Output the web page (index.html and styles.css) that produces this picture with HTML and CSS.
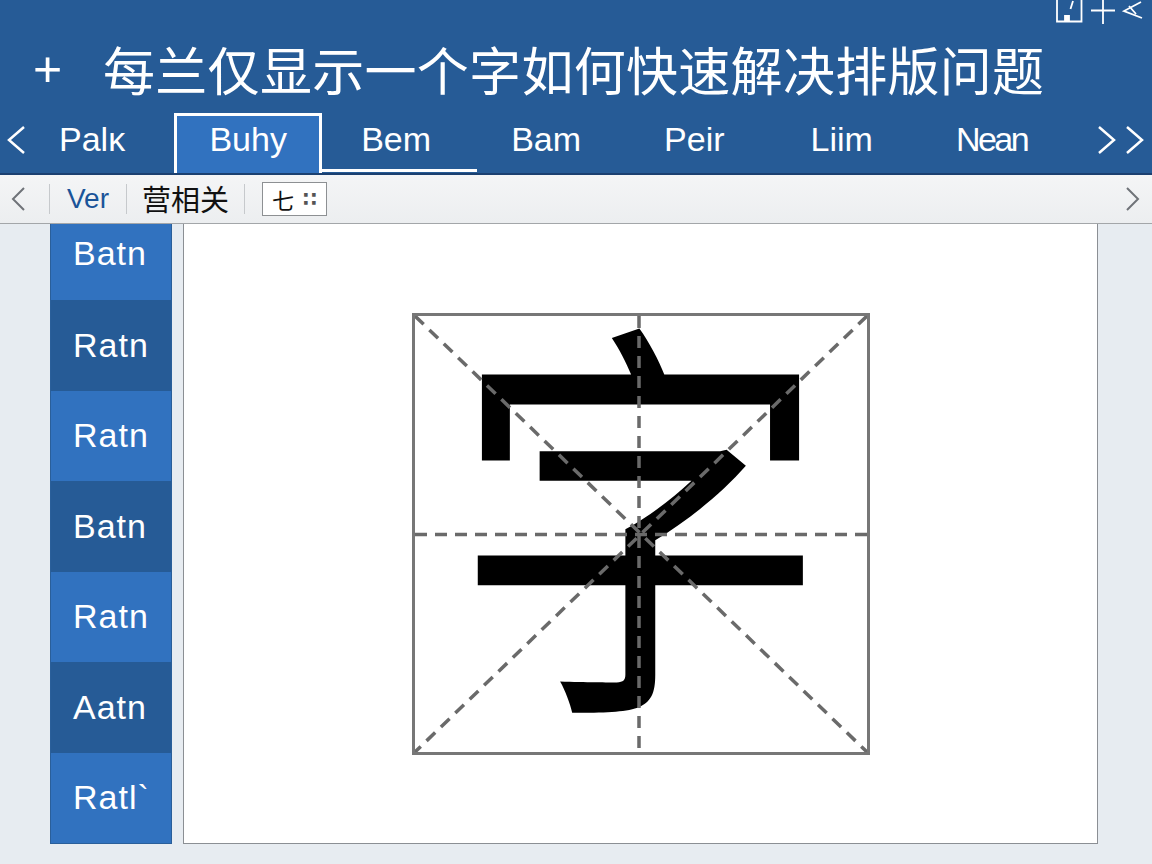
FILE: index.html
```html
<!DOCTYPE html>
<html lang="zh-CN">
  <head>
    <meta charset="UTF-8" />
    <meta name="viewport" content="width=device-width, initial-scale=1.0" />
    <title>每兰仅显示一个字如何快速解决排版问题</title>
    <link rel="stylesheet" href="styles.css">
  </head>
  <body>
    <header class="header">
      <div class="header__tools">
        <svg class="header__icon" width="90" height="24" viewBox="0 0 90 24" fill="none" stroke="#fff" stroke-width="1.800">
          <path d="M1 0v21.500h24.500V0" />
          <path d="M17 1l-2.500 8" />
          <path d="M9 21v-5h4v5" fill="#fff" />
          <path d="M35 10.500h24M47 0v24" />
          <path d="M85 2L68 11l18 7M73 6l7 8" />
        </svg>
      </div>
      <div class="header__title">
        <span class="header__plus">+</span>
        <h1 class="header__text">每兰仅显示一个字如何快速解决排版问题</h1>
      </div>
      <nav class="tabs">
        <svg class="tabs__arrow" width="20" height="30" viewBox="0 0 20 30" fill="none" stroke="#fff" stroke-width="2.500"><path d="M18 2L3 15l15 13" /></svg>
        <a class="tab tab--first">Palĸ</a>
        <a class="tab tab--active">Buhy</a>
        <a class="tab tab--line">Bem</a>
        <a class="tab tab--bam">Bam</a>
        <a class="tab tab--wide">Peir</a>
        <a class="tab tab--wide">Liim</a>
        <a class="tab tab--last">Nean</a>
        <svg class="tabs__next" width="48" height="30" viewBox="0 0 48 30" fill="none" stroke="#fff" stroke-width="2.500"><path d="M2 2l15 13L2 28M30 2l15 13-15 13" /></svg>
      </nav>
    </header>

    <div class="toolbar">
      <svg class="toolbar__arrow" width="14" height="24" viewBox="0 0 14 24" fill="none" stroke="#6f7378" stroke-width="2"><path d="M13 1L2 12l11 11" /></svg>
      <span class="toolbar__sep toolbar__sep--first"></span>
      <span class="toolbar__link">Ver</span>
      <span class="toolbar__sep"></span>
      <span class="toolbar__label">营相关</span>
      <span class="toolbar__sep"></span>
      <div class="toolbar__box"><span>七</span><span class="toolbar__dots">∷</span></div>
      <svg class="toolbar__next" width="14" height="24" viewBox="0 0 14 24" fill="none" stroke="#6f7378" stroke-width="2"><path d="M1 1l11 11L1 23" /></svg>
    </div>

    <main class="main">
      <ul class="side">
        <li class="side__item side__item--first">Batn</li>
        <li class="side__item side__item--dark">Ratn</li>
        <li class="side__item">Ratn</li>
        <li class="side__item side__item--dark">Batn</li>
        <li class="side__item">Ratn</li>
        <li class="side__item side__item--dark">Aatn</li>
        <li class="side__item">Ratl`</li>
      </ul>
      <section class="canvas">
        <div class="grid">
          <span class="grid__char">字</span>
          <svg class="grid__lines" viewBox="0 0 452 436" preserveAspectRatio="none" fill="none" stroke="#6a6a6a" stroke-width="3.500" stroke-dasharray="12 8">
            <path d="M0 0L452 436" />
            <path d="M452 0L0 436" />
            <path d="M0 218.500H452" />
            <path d="M224 0V436" />
          </svg>
        </div>
      </section>
    </main>
  </body>
</html>
```

FILE: styles.css
```css
* {
  margin: 0;
  padding: 0;
  box-sizing: border-box;
}

body {
  width: 1152px;
  height: 864px;
  overflow: hidden;
  font-family: "Liberation Sans", "Noto Sans CJK SC", sans-serif;
  background-color: #e7ecf1;
  display: flex;
  flex-direction: column;
}

/* header */
.header {
  height: 175px;
  background-color: #265b96;
  border-bottom: 2px solid #1b4070;
  color: #fff;
}

.header__tools {
  height: 24px;
  display: flex;
  justify-content: flex-end;
  padding-right: 6px;
}

.header__title {
  height: 89px;
  display: flex;
  align-items: center;
  padding-left: 33px;
}

.header__plus {
  width: 70px;
  font-size: 50px;
  line-height: 1;
  font-weight: 400;
}

.header__text {
  font-family: "Noto Sans CJK SC", sans-serif;
  font-size: 52px;
  font-weight: 400;
  letter-spacing: 0.3px;
  white-space: nowrap;
}

.tabs {
  height: 60px;
  display: flex;
  align-items: center;
}

.tabs__arrow {
  margin-left: 6px;
  margin-top: -6px;
  flex: none;
}

.tab {
  height: 60px;
  padding: 0 40px;
  font-size: 34px;
  line-height: 53px;
  white-space: nowrap;
}

.tab--first {
  padding: 0 49px 0 33px;
}

.tab--active {
  width: 148px;
  padding: 0;
  text-align: center;
  background-color: #3172bf;
  border: 3px solid #fff;
  border-bottom: none;
  line-height: 47px;
}

.tab--line {
  width: 155px;
  padding: 0 0 0 39px;
  border-bottom: 3px solid #fff;
  height: 59px;
  margin-bottom: 1px;
}

.tab--bam {
  padding: 0 40px 0 34px;
}

.tab--wide {
  padding: 0 43px;
}

.tab--last {
  letter-spacing: -2.5px;
}

.tabs__next {
  margin-left: auto;
  margin-right: 7px;
  margin-top: -6px;
  flex: none;
}

/* toolbar */
.toolbar {
  height: 49px;
  background: linear-gradient(#f4f5f6, #eceef0);
  border-bottom: 1px solid #a3a6a9;
  display: flex;
  align-items: center;
  padding: 0 12px 0 11px;
}

.toolbar__sep {
  width: 1px;
  height: 30px;
  background-color: #c6c9cc;
}

.toolbar__sep--first {
  margin-left: 24px;
}

.toolbar__link {
  font-size: 28px;
  color: #1a5499;
  width: 76px;
  text-align: center;
}

.toolbar__label {
  font-family: "Noto Sans CJK SC", sans-serif;
  font-size: 29px;
  line-height: 34px;
  color: #111;
  width: 117px;
  padding-bottom: 3px;
  text-align: center;
}

.toolbar__box {
  margin-left: 17px;
  width: 65px;
  height: 34px;
  background-color: #fff;
  border: 1px solid #8d9093;
  display: flex;
  align-items: center;
  padding-left: 9px;
  gap: 9px;
  font-family: "Noto Sans CJK SC", sans-serif;
  font-size: 22px;
  color: #111;
}

.toolbar__dots {
  color: #555;
  font-family: "DejaVu Sans", sans-serif;
  font-size: 20px;
  font-weight: 700;
}

.toolbar__next {
  margin-left: auto;
}

/* content */
.main {
  flex: 1;
  display: flex;
  gap: 11px;
  padding: 0 54px 20px 50px;
}

.side {
  width: 122px;
  list-style: none;
  display: flex;
  flex-direction: column;
  border: solid #2a5f9a;
  border-width: 0 1px 1px;
}

.side__item {
  flex: 1;
  display: flex;
  align-items: center;
  padding-left: 22px;
  font-size: 34px;
  letter-spacing: 1px;
  color: #fff;
  background-color: #3172bf;
}

.side__item--first {
  flex: none;
  height: 76px;
  padding-bottom: 18px;
}

.side__item--dark {
  background-color: #265b96;
}

.canvas {
  flex: 1;
  background-color: #fff;
  border: 1px solid #8b8f94;
  border-top: none;
  display: flex;
  align-items: center;
  justify-content: center;
}

.grid {
  width: 458px;
  height: 442px;
  border: 3px solid #777;
  position: relative;
  display: flex;
  align-items: center;
  justify-content: center;
}

.grid__char {
  font-family: "Noto Sans CJK SC", sans-serif;
  font-size: 415px;
  line-height: 1;
  color: #000;
  transform: translateY(-34px) scaleX(0.91);
}

.grid__lines {
  position: absolute;
  top: 0;
  left: 0;
  width: 100%;
  height: 100%;
}
```
